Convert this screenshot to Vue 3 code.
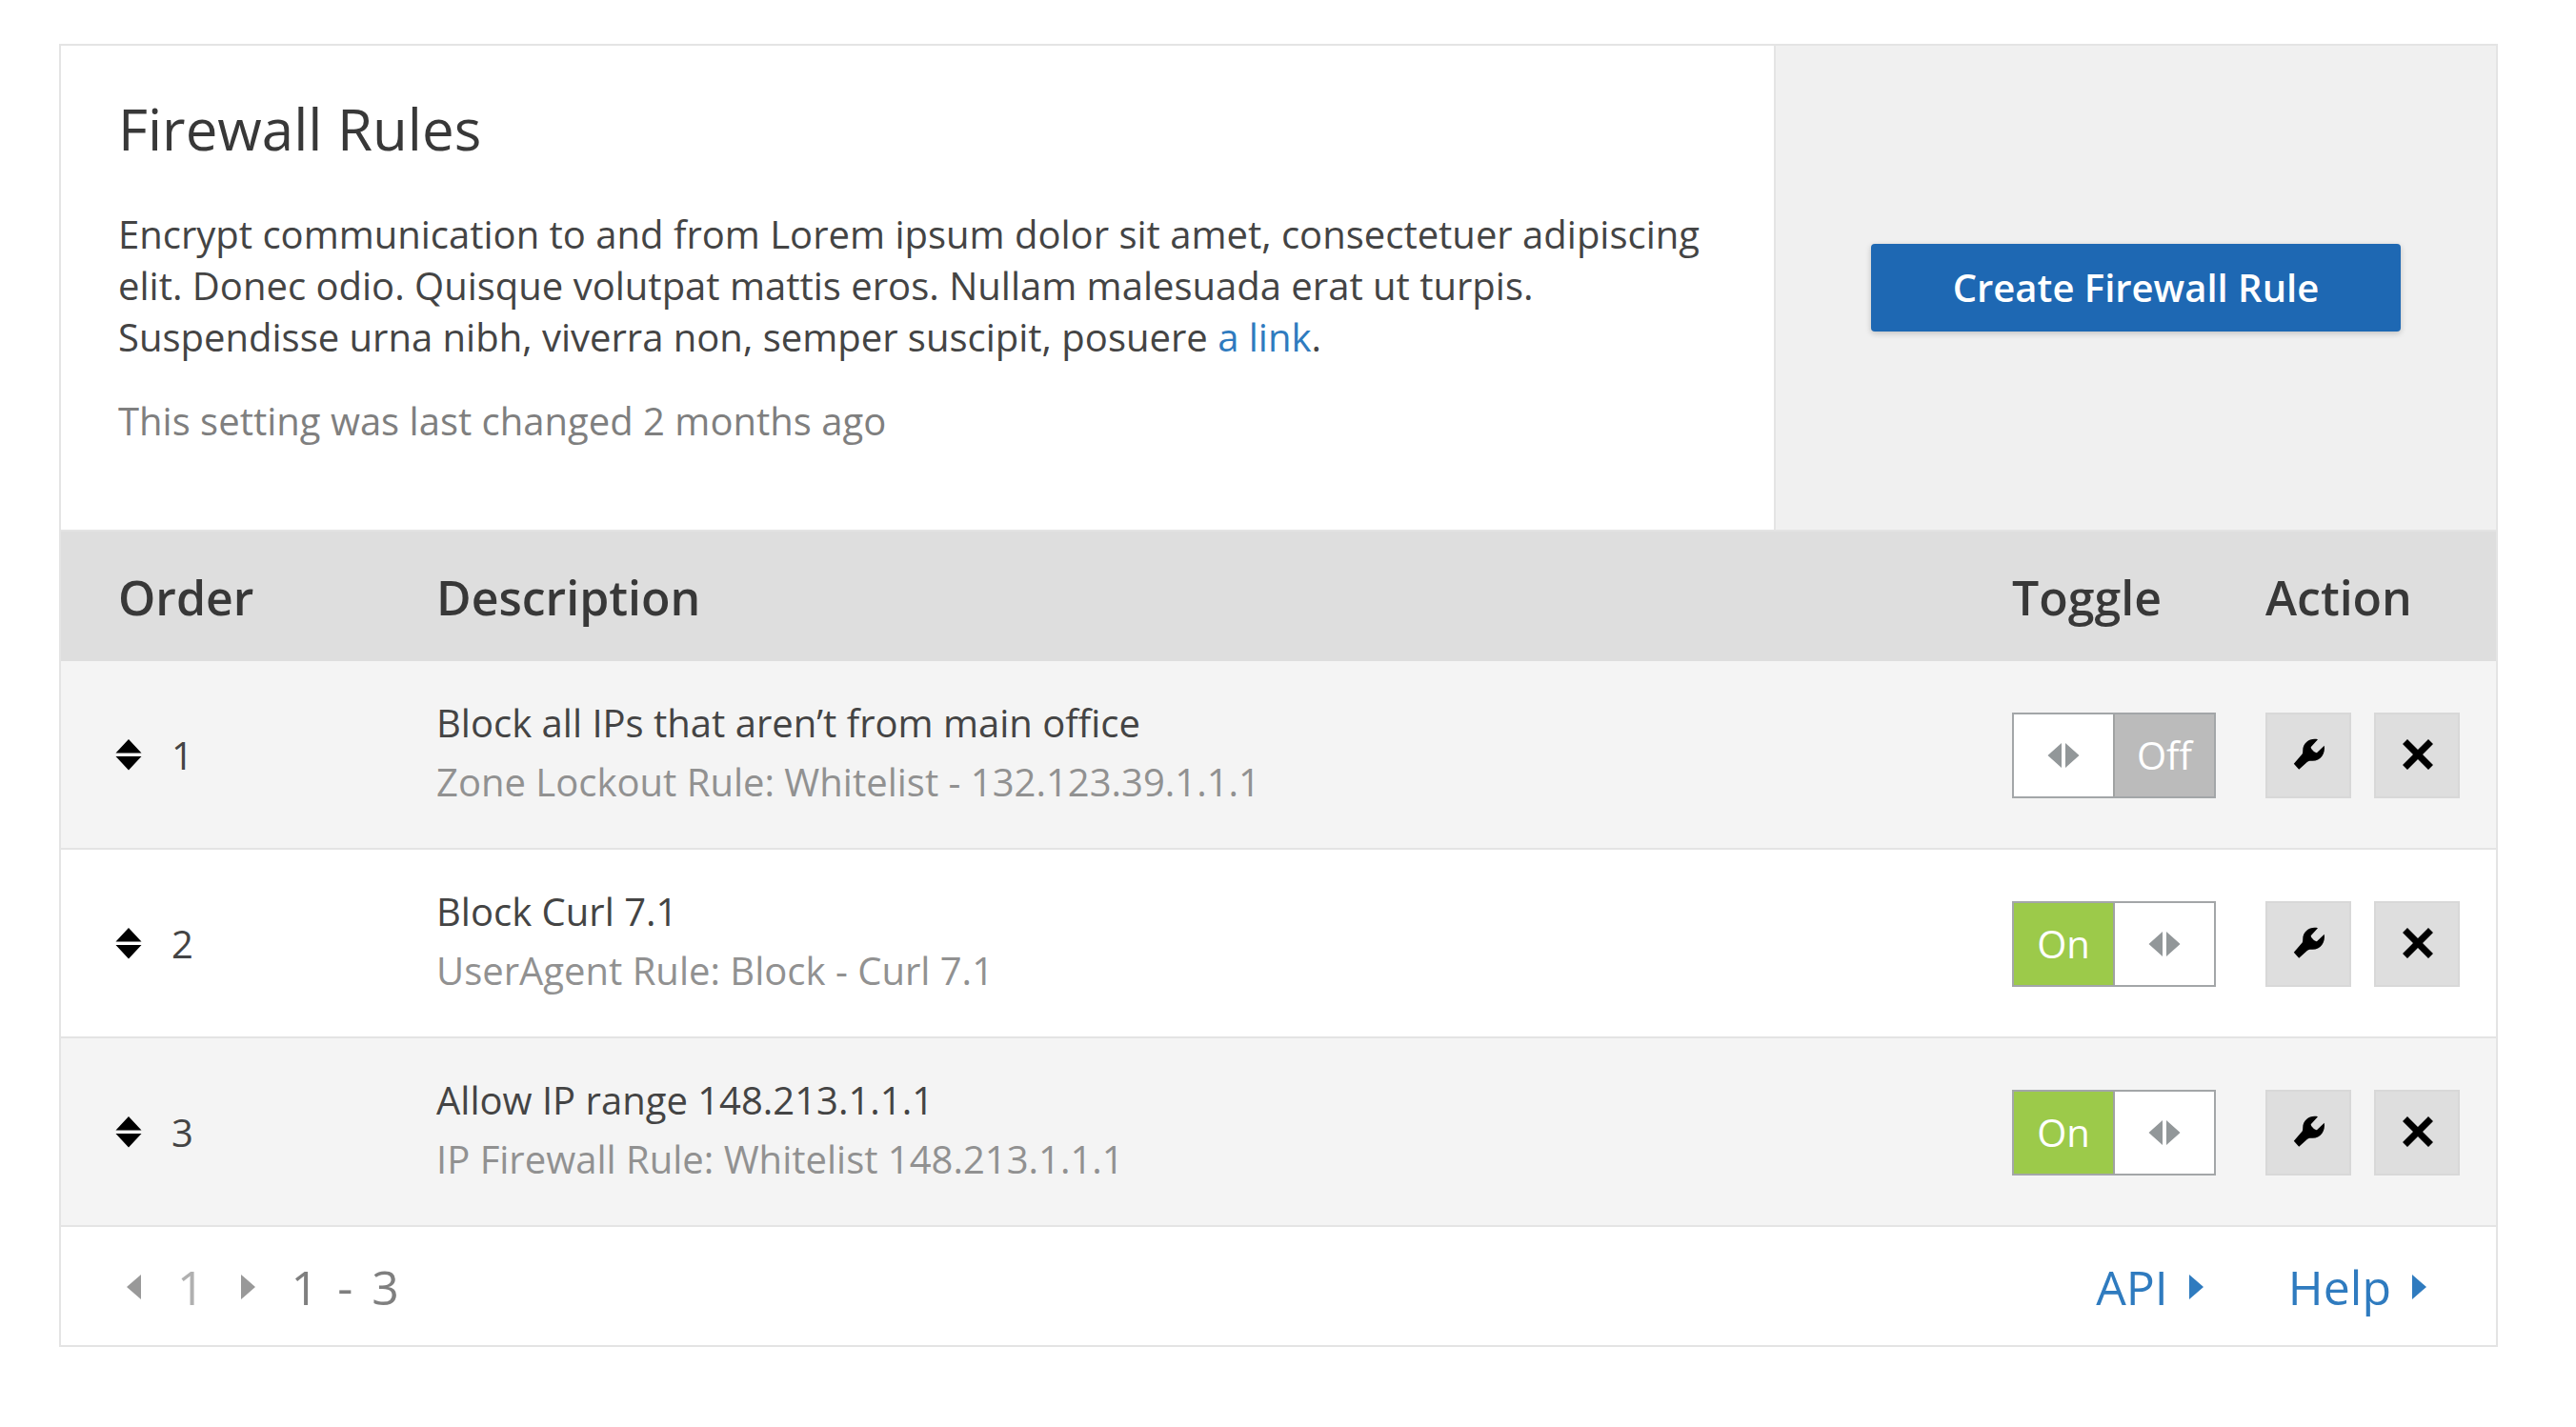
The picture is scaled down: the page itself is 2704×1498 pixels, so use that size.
<script setup>
import { ref } from 'vue'

const rules = ref([
  {
    order: 1,
    title: 'Block all IPs that aren’t from main office',
    detail: 'Zone Lockout Rule: Whitelist - 132.123.39.1.1.1',
    enabled: false,
  },
  {
    order: 2,
    title: 'Block Curl 7.1',
    detail: 'UserAgent Rule: Block - Curl 7.1',
    enabled: true,
  },
  {
    order: 3,
    title: 'Allow IP range 148.213.1.1.1',
    detail: 'IP Firewall Rule: Whitelist 148.213.1.1.1',
    enabled: true,
  },
])
</script>

<template>
  <main class="card">
    <section class="intro">
      <div class="intro-text">
        <h1>Firewall Rules</h1>
        <p class="lead">
          Encrypt communication to and from Lorem ipsum dolor sit amet, consectetuer adipiscing
          elit. Donec odio. Quisque volutpat mattis eros. Nullam malesuada erat ut turpis.
          Suspendisse urna nibh, viverra non, semper suscipit, posuere <a href="#">a link</a>.
        </p>
        <p class="changed">This setting was last changed 2 months ago</p>
      </div>
      <div class="intro-action">
        <button type="button" class="create">Create Firewall Rule</button>
      </div>
    </section>

    <table class="rules">
      <colgroup>
        <col class="col-order" />
        <col />
        <col class="col-toggle" />
        <col class="col-action" />
      </colgroup>
      <thead>
        <tr>
          <th scope="col" class="order">Order</th>
          <th scope="col">Description</th>
          <th scope="col">Toggle</th>
          <th scope="col">Action</th>
        </tr>
      </thead>
      <tbody>
        <tr v-for="rule in rules" :key="rule.order">
          <td class="order">
            <div class="order-cell">
              <button type="button" class="sort" aria-label="Change order">
                <svg width="28" height="34" viewBox="0 0 28 34" aria-hidden="true">
                  <path d="M14 0L27.5 14.5H0.5ZM0.5 18H27.5L14 32.5Z" />
                </svg>
              </button>
              <span>{{ rule.order }}</span>
            </div>
          </td>
          <td class="description">
            <div class="rule-title">{{ rule.title }}</div>
            <div class="rule-detail">{{ rule.detail }}</div>
          </td>
          <td>
            <label class="toggle" :class="{ on: rule.enabled }">
              <input v-model="rule.enabled" type="checkbox" :aria-label="rule.title" />
              <span class="state">{{ rule.enabled ? 'On' : 'Off' }}</span>
              <span class="knob">
                <svg width="34" height="26" viewBox="0 0 34 26" aria-hidden="true">
                  <path d="M15 0V26L0.5 13ZM19 0V26L33.5 13Z" />
                </svg>
              </span>
            </label>
          </td>
          <td>
            <div class="actions">
              <button type="button" class="icon-button" aria-label="Edit rule">
                <svg width="34" height="34" viewBox="-1 1 34 34" aria-hidden="true">
                  <path
                    d="M26 1.3C19 -0.6 10.2 3.6 10.2 13.2C10.2 15.3 10 16.4 8.8 17.6L0.8 26.7L6.2 32.7L14.8 25C16 24 17.4 23.7 19.5 23.8C28.5 24.4 34.2 16.5 32.8 7.8L25.2 15.1C23.2 15.6 18.8 11.6 18.7 9.2Z"
                  />
                </svg>
              </button>
              <button type="button" class="icon-button" aria-label="Delete rule">
                <svg width="34" height="34" viewBox="-1 1 34 34" aria-hidden="true">
                  <path
                    d="M6 1L17 12L28 1L33 6L22 17L33 28L28 33L17 22L6 33L1 28L12 17L1 6Z"
                  />
                </svg>
              </button>
            </div>
          </td>
        </tr>
      </tbody>
    </table>

    <footer class="footer">
      <nav class="pager" aria-label="Pages">
        <button type="button" class="page-arrow" aria-label="Previous page">
          <svg width="15" height="26" viewBox="0 0 15 26" aria-hidden="true">
            <path d="M15 0V26L0 13Z" />
          </svg>
        </button>
        <span class="page">1</span>
        <button type="button" class="page-arrow" aria-label="Next page">
          <svg width="15" height="26" viewBox="0 0 15 26" aria-hidden="true">
            <path d="M0 0V26L15 13Z" />
          </svg>
        </button>
        <span class="range"><span>1</span><span>-</span><span>3</span></span>
      </nav>
      <div class="links">
        <a v-for="label in ['API', 'Help']" :key="label" href="#">
          {{ label }}
          <svg width="15" height="26" viewBox="0 0 15 26" aria-hidden="true">
            <path d="M0 0V26L15 13Z" />
          </svg>
        </a>
      </div>
    </footer>
  </main>
</template>

<style>
body {
  background: #fff;
}
</style>

<style scoped>
.card {
  margin: 46px 82px 46px 62px;
  border: 2px solid #e4e4e4;
  background: #fff;
  color: #444;
  font-family: 'Open Sans', 'Noto Sans', sans-serif;
  font-size: 40px;
  line-height: 54px;
}

button {
  margin: 0;
  padding: 0;
  border: 0;
  background: none;
  color: inherit;
  font: inherit;
  cursor: pointer;
}

svg {
  display: block;
  overflow: visible;
  fill: currentColor;
}

a {
  color: #2f7bbf;
  text-decoration: none;
}

.intro {
  display: grid;
  grid-template-columns: 1fr 758px;
  border-bottom: 2px solid #e4e4e4;
}

.intro-text {
  padding: 47px 60px 87px;
}

h1 {
  margin: 0 0 44px;
  color: #383838;
  font-size: 60px;
  font-weight: 400;
  line-height: 80px;
}

.lead {
  margin: 0 0 34px;
}

.changed {
  margin: 0;
  color: #7f7f7f;
}

.intro-action {
  display: flex;
  align-items: center;
  justify-content: center;
  border-left: 2px solid #e4e4e4;
  background: #f0f0f0;
}

.create {
  width: 556px;
  height: 92px;
  border-radius: 4px;
  background: #1e68b3;
  box-shadow: 0 2px 6px rgba(0, 0, 0, 0.2);
  color: #fff;
  font-weight: 600;
}

.rules {
  width: 100%;
  border-spacing: 0;
  table-layout: fixed;
}

.col-order {
  width: 394px;
}

.col-toggle {
  width: 266px;
}

.col-action {
  width: 242px;
}

th {
  padding: 35px 0 33px;
  background: #dedede;
  color: #383838;
  font-size: 50px;
  font-weight: 600;
  line-height: 68px;
  text-align: left;
}

th.order {
  padding-left: 60px;
}

td {
  padding: 2px 0 0;
  border-bottom: 2px solid #e4e4e4;
  vertical-align: middle;
}

td.order {
  padding-left: 57px;
}

tbody tr:nth-child(odd) {
  background: #f4f4f4;
}

.order-cell {
  display: flex;
  align-items: center;
  gap: 31px;
}

.sort {
  color: #000;
}

td.description {
  padding: 34px 0 38px;
  line-height: 62px;
}

.rule-detail {
  color: #919191;
}

.toggle {
  position: relative;
  display: flex;
  flex-direction: row-reverse;
  width: 214px;
  height: 90px;
  box-sizing: border-box;
  border: 2px solid #a3a6a8;
  background: #fff;
  cursor: pointer;
}

.toggle.on {
  flex-direction: row;
}

.toggle input {
  position: absolute;
  inset: 0;
  width: 100%;
  height: 100%;
  margin: 0;
  opacity: 0;
  cursor: pointer;
}

.state,
.knob {
  display: flex;
  flex: 1;
  align-items: center;
  justify-content: center;
}

.state {
  border-left: 2px solid #a0a2a2;
  background: #bbb;
  color: #fff;
}

.on .state {
  border-right: 2px solid #a0a2a2;
  border-left: 0;
  background: #9cca4a;
}

.knob {
  color: #929799;
}

.actions {
  display: flex;
  gap: 24px;
}

.icon-button {
  display: flex;
  align-items: center;
  justify-content: center;
  width: 90px;
  height: 90px;
  box-sizing: border-box;
  border: 2px solid #d8d8d8;
  background: #dedede;
  color: #000;
}

.footer {
  display: flex;
  align-items: center;
  justify-content: space-between;
  padding: 29px 73px 27px 69px;
  font-size: 50px;
  line-height: 68px;
}

.pager {
  display: flex;
  align-items: center;
  gap: 38px;
}

.page-arrow {
  color: #999;
}

.page {
  color: #b0b0b0;
}

.range {
  display: flex;
  gap: 20px;
  color: #7f7f7f;
}

.links {
  display: flex;
  gap: 89px;
}

.links a {
  display: flex;
  align-items: center;
  gap: 22px;
}
</style>
